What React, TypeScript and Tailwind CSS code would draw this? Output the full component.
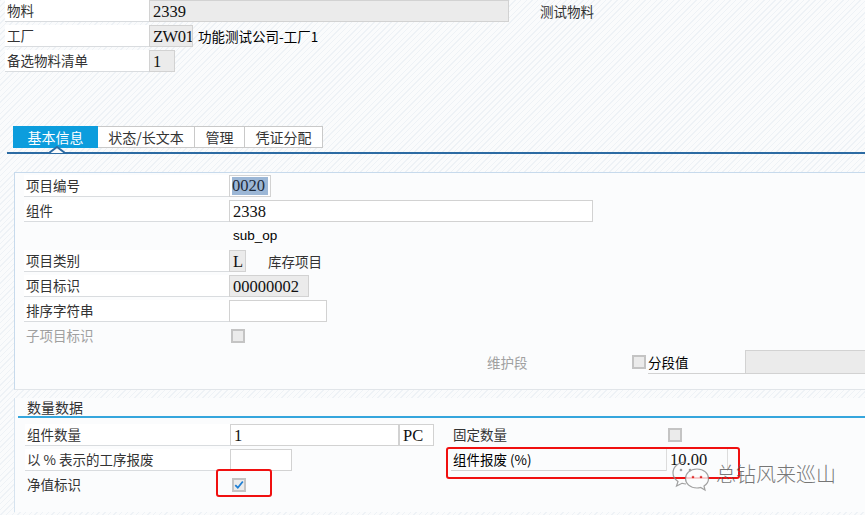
import type { ReactNode } from 'react';

// SAP-style BOM item detail screen

const Label = ({ w, children, muted }: { w: string; children?: ReactNode; muted?: boolean }) => (
    <div className={`${w} h-[22px] shrink-0 bg-white border-b border-[#d9dcdf] pl-[2px] leading-[21px] whitespace-nowrap ${muted ? 'text-[#a0a0a0]' : 'text-[#333]'}`}>
        {children}
    </div>
);

const Field = ({ w, children, grey }: { w: string; children?: ReactNode; grey?: boolean }) => (
    <div className={`${w} h-[22px] shrink-0 overflow-hidden border border-[#d2d2d2] ${grey ? 'bg-[#ebebeb]' : 'bg-white'} pl-[3px] font-['Liberation_Serif',serif] text-[16.5px] leading-[21px] text-[#111] whitespace-nowrap`}>
        {children}
    </div>
);

const Check = ({ checked }: { checked?: boolean }) => (
    <div className="w-[14px] h-[14px] shrink-0 border-2 border-[#c4c4c4] bg-[#ebebeb] flex items-center justify-center">
        {checked && (
            <svg width="12" height="12" viewBox="0 0 12 12">
                <path d="M1.5 6.2 L4.6 9.3 L10.6 1.8" fill="none" stroke="#1f7fd4" strokeWidth="2.2" />
            </svg>
        )}
    </div>
);

const Tab = ({ w, children, active }: { w: string; children: ReactNode; active?: boolean }) => (
    <div className={`${w} h-[22px] flex items-center justify-center text-[14px] ${active ? 'bg-[#0c9ddd] text-white' : 'bg-white text-[#333] border border-l-0 border-[#c9c9c9]'}`}>
        {children}
    </div>
);

export default function App() {
    return (
        <div className="relative w-[865px] h-[515px] overflow-hidden bg-[repeating-linear-gradient(135deg,#eef2f6_0px,#eef2f6_1px,#fafbfc_1px,#fafbfc_4px)] font-['Noto_Sans_CJK_SC','Noto_Sans',sans-serif] text-[13.5px] text-[#333]">
            {/* header fields */}
            <div className="flex flex-col gap-[3px] pl-[5px]">
                <div className="flex h-[22px]">
                    <Label w="w-[144px]">物料</Label>
                    <Field w="w-[360px]" grey>2339</Field>
                    <span className="ml-[31px] leading-[22px]">测试物料</span>
                </div>
                <div className="flex h-[22px]">
                    <Label w="w-[144px]">工厂</Label>
                    <Field w="w-[44px]" grey><span className="tracking-[-0.5px]">ZW01</span></Field>
                    <span className="ml-[5px] leading-[22px] text-black">功能测试公司-工厂1</span>
                </div>
                <div className="flex h-[22px]">
                    <Label w="w-[144px]">备选物料清单</Label>
                    <Field w="w-[26px]" grey>1</Field>
                </div>
            </div>

            {/* tabs */}
            <div className="mt-[54px] pl-[13px] flex">
                <Tab w="w-[85px]" active>基本信息</Tab>
                <Tab w="w-[97px]">状态/长文本</Tab>
                <Tab w="w-[50px]">管理</Tab>
                <Tab w="w-[78px]">凭证分配</Tab>
            </div>
            <div className="relative ml-[7px] mt-[4px] h-[2px] bg-[#2c6ba3]">
                <svg className="absolute left-[42px] top-[-6px]" width="16" height="8" viewBox="0 0 16 8">
                    <polygon points="1,7 8,1 15,7" fill="#fafbfc" />
                    <polyline points="0,7 8,1 16,7" fill="none" stroke="#2c6ba3" strokeWidth="2" />
                </svg>
            </div>

            {/* basic data panel */}
            <div className="ml-[14px] mt-[18px] h-[218px] border-l border-t border-dashed border-[#c7daec] border-b-[#e1e5e9] border-b border-solid bg-[#fbfcfd] pl-[9px] pt-[2px] flex flex-col gap-[3px]">
                <div className="flex h-[22px]">
                    <Label w="w-[205px]">项目编号</Label>
                    <div className="w-[42px] h-[22px] border border-[#d2d2d2] bg-white p-[1px] pl-[2px]">
                        <span className="block w-[36px] h-[18px] bg-[#9cb7d6] font-['Liberation_Serif',serif] text-[16.5px] leading-[18px] text-[#1c2a3a]">0020</span>
                    </div>
                </div>
                <div className="flex h-[22px]">
                    <Label w="w-[205px]">组件</Label>
                    <Field w="w-[364px]">2338</Field>
                </div>
                <div className="flex h-[22px]">
                    <div className="w-[205px] shrink-0" />
                    <span className="pl-[4px] leading-[22px] text-black font-['Liberation_Sans',sans-serif] text-[13.5px]">sub_op</span>
                </div>
                <div className="flex h-[22px]">
                    <Label w="w-[205px]">项目类别</Label>
                    <Field w="w-[17px]" grey>L</Field>
                    <span className="ml-[22px] leading-[22px]">库存项目</span>
                </div>
                <div className="flex h-[22px]">
                    <Label w="w-[205px]">项目标识</Label>
                    <Field w="w-[80px]" grey>00000002</Field>
                </div>
                <div className="flex h-[22px]">
                    <Label w="w-[205px]">排序字符串</Label>
                    <Field w="w-[98px]" />
                </div>
                <div className="flex h-[22px] items-center">
                    <div className="w-[205px] h-[22px] shrink-0 pl-[2px] leading-[21px] text-[#a0a0a0]">子项目标识</div>
                    <div className="ml-[2px]"><Check /></div>
                </div>
                <div className="flex h-[24px] items-center">
                    <span className="ml-[463px] w-[145px] shrink-0 text-[#a0a0a0]">维护段</span>
                    <Check />
                    <div className="ml-[2px] w-[97px] shrink-0 h-[24px] border-b border-[#d2d2d2] leading-[24px] text-black">分段值</div>
                    <div className="w-[120px] shrink-0 h-[24px] border border-r-0 border-[#d2d2d2] bg-[#ebebeb]" />
                </div>
            </div>

            {/* quantity panel */}
            <div className="ml-[14px] mt-[8px] h-[114px] border-l border-[#d6e3ef] bg-[#fbfcfd] pl-[3px]">
                <div className="h-[18px] pl-[9px] leading-[18px] text-[14px]">数量数据</div>
                <div className="h-[2px] bg-[#35a6dd]" />
                <div className="pl-[7px] pt-[6px] flex flex-col gap-[3px]">
                    <div className="flex h-[22px]">
                        <Label w="w-[205px]">组件数量</Label>
                        <Field w="w-[169px]">1</Field>
                        <Field w="w-[35px]">PC</Field>
                        <div className="ml-[17px] w-[217px] h-[22px] pl-[2px] leading-[21px]">固定数量</div>
                        <div className="mt-[4px]"><Check /></div>
                    </div>
                    <div className="flex h-[22px]">
                        <Label w="w-[205px]">以 % 表示的工序报废</Label>
                        <Field w="w-[62px]" />
                        <div className="ml-[159px] w-[215px] shrink-0 h-[22px] border-b border-[#d2d2d2] pl-[2px] leading-[21px] text-black">组件报废 (%)</div>
                        <div className="w-[62px] h-[22px] border-x border-[#dcdcdc] pl-[3px] font-['Liberation_Serif',serif] text-[16.5px] leading-[21px] text-[#111]">10.00</div>
                    </div>
                    <div className="flex h-[22px] items-center">
                        <div className="w-[205px] h-[22px] shrink-0 pl-[2px] leading-[21px]">净值标识</div>
                        <div className="ml-[2px]"><Check checked /></div>
                    </div>
                </div>
            </div>

            {/* red annotation boxes */}
            <div className="absolute left-[216px] top-[469px] w-[56px] h-[28px] border-2 border-[#f01010] rounded-[3px]" />
            <div className="absolute left-[446px] top-[447px] w-[294px] h-[32px] border-2 border-[#f01010] rounded-[3px]" />

            {/* watermark */}
            <div className="absolute left-[672px] top-[455px] flex items-center opacity-80">
                <svg width="38" height="38" viewBox="0 0 38 38">
                    <path d="M14 7 C6 7 1 12 1 18 C1 21.5 3 24.5 6 26.5 L4.5 31 L10 28.3 C11.3 28.7 12.7 29 14 29" fill="none" stroke="#8a8a8a" strokeWidth="1.2" />
                    <path d="M25 14 C18 14 13.5 18.5 13.5 23.5 C13.5 28.5 18 33 25 33 C26.3 33 27.5 32.8 28.6 32.5 L33 35 L32 31 C35 29.2 36.5 26.5 36.5 23.5 C36.5 18.5 32 14 25 14 Z" fill="#fbfcfd" stroke="#8a8a8a" strokeWidth="1.2" />
                    <circle cx="9" cy="15" r="1.3" fill="#8a8a8a" />
                    <circle cx="18" cy="15" r="1.3" fill="#8a8a8a" />
                    <circle cx="21" cy="22" r="1.3" fill="#d33" />
                    <circle cx="29" cy="22" r="1.3" fill="#d33" />
                </svg>
                <span className="ml-[6px] text-[20px] leading-[24px] text-[#555] font-light tracking-[0px]">总钻风来巡山</span>
            </div>
        </div>
    );
}
